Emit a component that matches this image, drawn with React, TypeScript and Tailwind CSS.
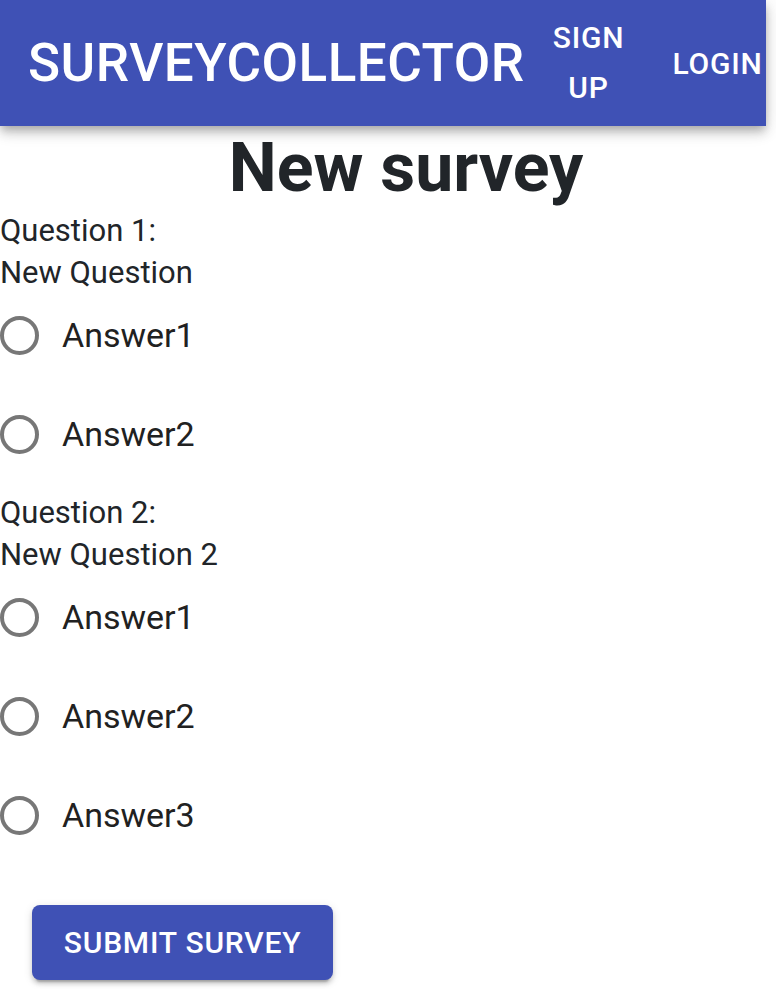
import React from "react";

type Question = {
  label: string;
  text: string;
  answers: string[];
};

const questions: Question[] = [
  { label: "Question 1:", text: "New Question", answers: ["Answer1", "Answer2"] },
  {
    label: "Question 2:",
    text: "New Question 2",
    answers: ["Answer1", "Answer2", "Answer3"],
  },
];

function RadioRow({ label }: { label: string }) {
  return (
    <label className="flex h-[99px] items-start pt-[22px]">
      <span className="flex h-[39px] w-[39px] shrink-0 rounded-full border-[4px] border-[#777777]" />
      <span className="ml-[23px] text-[34px] leading-[39px] text-[#212121]">
        {label}
      </span>
    </label>
  );
}

export default function App() {
  return (
    <div
      className="min-h-[989px] w-[776px] bg-white"
      style={{ fontFamily: "Roboto, 'Liberation Sans', sans-serif" }}
    >
      {/* App bar */}
      <header className="relative z-10 flex h-[126px] w-[766px] items-center bg-[#3f51b5] pl-[28px] text-white shadow-[0_4px_8px_-2px_rgba(0,0,0,0.2),0_8px_10px_0_rgba(0,0,0,0.14),0_2px_20px_0_rgba(0,0,0,0.12)]">
        <h1 className="text-[53px] font-medium leading-none tracking-[0.5px]">
          SURVEYCOLLECTOR
        </h1>
        <button className="ml-[28px] flex w-[72px] flex-col items-center text-[30px] font-medium leading-[50px] tracking-[0.8px]">
          <span>SIGN</span>
          <span>UP</span>
        </button>
        <button className="ml-[48px] text-[30px] font-medium leading-[49px] tracking-[0.8px]">
          LOGIN
        </button>
      </header>

      {/* Survey */}
      <main>
        <h2 className="pl-[36px] text-center text-[68px] font-bold leading-[84px] text-[#212529]">
          New survey
        </h2>

        {questions.map((q) => (
          <section key={q.label}>
            <div className="text-[31px] leading-[42px] text-[#212529]">
              <p>{q.label}</p>
              <p>{q.text}</p>
            </div>
            {q.answers.map((a) => (
              <RadioRow key={a} label={a} />
            ))}
          </section>
        ))}

        <button className="ml-[32px] mt-[32px] flex h-[75px] w-[301px] items-center justify-center rounded-[8px] bg-[#3f51b5] text-[30px] font-medium tracking-[0.8px] text-white shadow-[0_6px_2px_-4px_rgba(0,0,0,0.2),0_4px_4px_0_rgba(0,0,0,0.14),0_2px_10px_0_rgba(0,0,0,0.12)]">
          SUBMIT SURVEY
        </button>
      </main>
    </div>
  );
}
